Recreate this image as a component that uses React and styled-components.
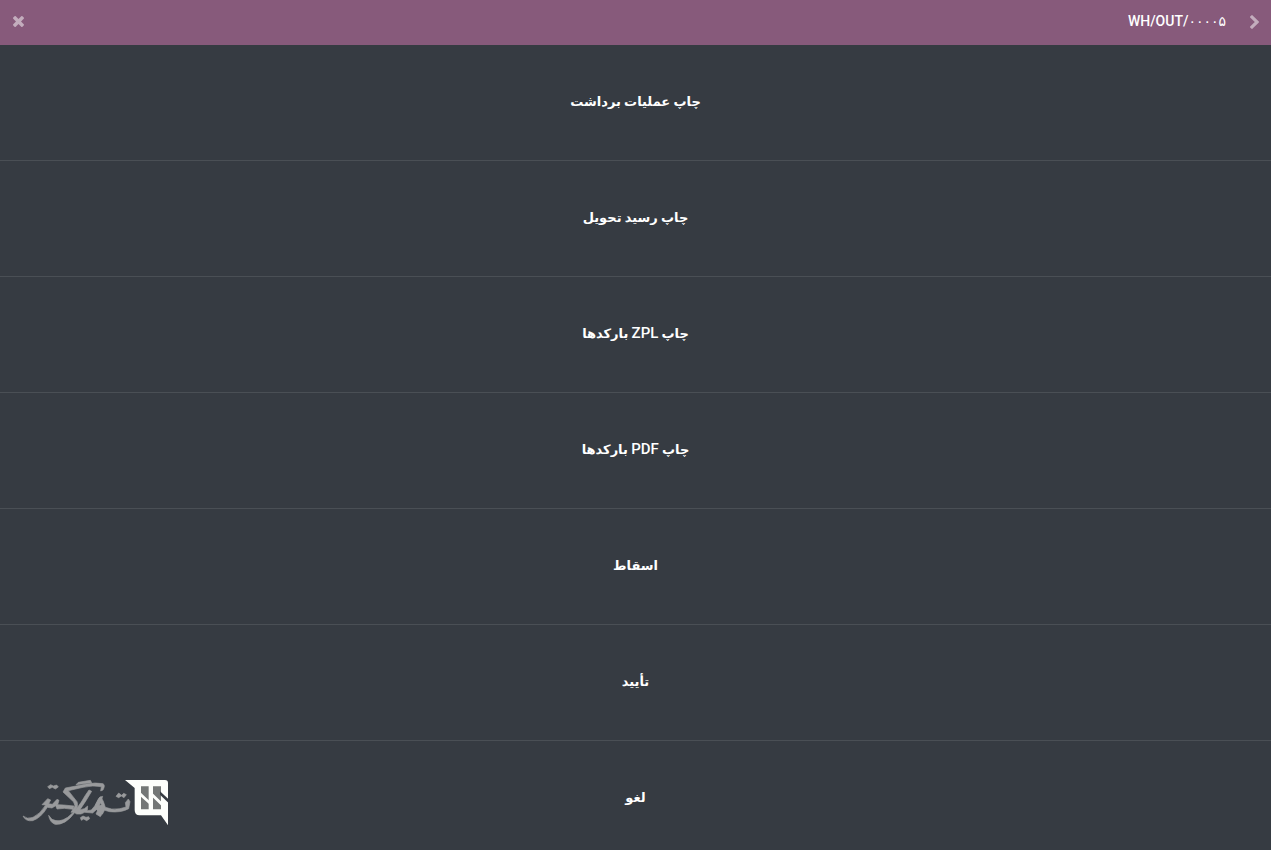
import styled, { createGlobalStyle } from "styled-components";

const GlobalStyle = createGlobalStyle`
  * {
    box-sizing: border-box;
  }
  body {
    margin: 0;
    background: #363b42;
    font-family: Roboto, "DejaVu Sans", sans-serif;
    font-size: 14px;
    line-height: 21px;
  }
`;

const Page = styled.div`
  display: flex;
  flex-direction: column;
  height: 100vh;
  overflow: hidden;
  color: white;
`;

const Header = styled.header`
  display: flex;
  flex: none;
  align-items: center;
  gap: 24px;
  height: 45px;
  padding: 0 12px 2px 13px;
  background: #875a7b;
`;

const Title = styled.h1`
  flex: 1;
  margin: 0;
  font-size: 14px;
  font-weight: 500;
  text-align: right;
`;

const IconButton = styled.button`
  display: flex;
  padding: 0;
  border: 0;
  background: none;
  color: #c3adbd;
  cursor: pointer;

  svg {
    width: ${({ $width }) => $width}px;
    height: ${({ $height }) => $height}px;
    fill: currentColor;
  }
`;

const Menu = styled.main`
  display: flex;
  flex-direction: column;
`;

const MenuButton = styled.button`
  flex: none;
  height: 116px;
  padding: 0 0 2px;
  border: 0;
  border-bottom: 1px solid #4a4f55;
  background: #363b42;
  color: white;
  font: inherit;
  font-size: 13px;
  font-weight: bold;
  cursor: pointer;
`;

const Latin = styled.bdi`
  font-size: 15px;
  font-weight: 500;
`;

const Logo = styled.svg`
  position: fixed;
  bottom: 20px;
  left: 20px;
  width: 150px;
  height: 55px;
  pointer-events: none;
`;

const Calligraphy = styled.g`
  fill: #999a9c;
  stroke: #999a9c;
  stroke-width: 2;
  stroke-linejoin: round;
`;

const actions = [
  { id: "picking", label: "چاپ عملیات برداشت" },
  { id: "delivery", label: "چاپ رسید تحویل" },
  {
    id: "zpl",
    label: (
      <>
        چاپ <Latin>ZPL</Latin> بارکدها
      </>
    ),
  },
  {
    id: "pdf",
    label: (
      <>
        چاپ <Latin>PDF</Latin> بارکدها
      </>
    ),
  },
  { id: "scrap", label: "اسقاط" },
  { id: "validate", label: "تأیید" },
  { id: "cancel", label: "لغو" },
];

function ChevronIcon() {
  return (
    <svg viewBox="90 -192 1036 1612" aria-hidden="true">
      <path d="M1107 659l-742 742q-19 19-45 19t-45-19l-166-166q-19-19-19-45t19-45l531-531-531-531q-19-19-19-45t19-45l166-166q19-19 45-19t45 19l742 742q19 19 19 45t-19 45z" />
    </svg>
  );
}

function CloseIcon() {
  return (
    <svg viewBox="110 366 1188 1188" aria-hidden="true">
      <path d="M1298 1322q0 40-28 68l-136 136q-28 28-68 28t-68-28l-294-294-294 294q-28 28-68 28t-68-28l-136-136q-28-28-28-68t28-68l294-294-294-294q-28-28-28-68t28-68l136-136q28-28 68-28t68 28l294 294 294-294q28-28 68-28t68 28l136 136q28 28 28 68t-28 68l-294 294 294 294q28 28 28 68z" />
    </svg>
  );
}

function BrandLogo() {
  return (
    <Logo viewBox="15 15 450 165" aria-hidden="true">
      <Calligraphy>
        <path d="M24 138Q36 149 54 142Q76 132 92 105L81 104L98 86L107 90L101 101L112 103L126 88L132 91L128 104L146 105L177 108L174 118L148 115L126 117L122 107L111 114L97 112Q78 144 53 152Q32 155 24 138Z" />
        <path d="M98 50L107 44L115 48L125 45L130 51L121 57L112 52L103 56Z" />
        <path d="M144 66L151 54L210 43Q242 36 264 41Q272 45 264 60L257 63L259 50Q234 45 204 52L160 62L186 95Q192 110 178 126L168 127L180 108L176 96Z" />
        <path d="M183 44L190 37L226 31L230 38Z" />
        <path d="M101 136L111 148Q134 159 158 142Q186 121 211 76L222 60L230 64L213 92L195 119L208 116L218 108L217 122L229 120L239 108L254 82L263 79L259 92L251 110L265 121L263 132L244 119L233 129L209 127L198 132L185 132L179 128Q151 166 120 163Q104 157 101 136Z" />
        <path d="M196 143L204 138L213 142L221 140L224 146L215 152L206 147L199 151Z" />
        <path
          fillRule="evenodd"
          d="M242 104L250 87L257 80L265 94L271 112L290 117Q314 119 333 111L331 98L340 87L345 95L341 116Q317 129 284 125L269 121L256 140L243 132L252 112L243 113ZM254 96L251 107L260 104Z"
        />
        <path d="M303 79L311 69L320 76L326 70L334 74L327 83L319 78L311 83Z" />
      </Calligraphy>
      <path
        fill="#fdfefb"
        d="M330 30H450Q459 30 459 39V166L438 136H374Q359 136 359 120V54Z"
      />
      <path fill="#747776" d="M378 49H401V118H378ZM414 49H438V118H414Z" />
      <path fill="#fdfefb" d="M376 67L403 92V103L376 79ZM405 62L440 96V108L405 74Z" />
      <path fill="#363b42" d="M435 64L460 87V98L435 74Z" />
    </Logo>
  );
}

export default function App() {
  return (
    <Page dir="rtl" lang="fa">
      <GlobalStyle />
      <Header>
        <IconButton aria-label="بازگشت" $width={9} $height={14}>
          <ChevronIcon />
        </IconButton>
        <Title dir="ltr">WH/OUT/۰۰۰۰۵</Title>
        <IconButton aria-label="بستن" $width={11} $height={11}>
          <CloseIcon />
        </IconButton>
      </Header>
      <Menu>
        {actions.map(({ id, label }) => (
          <MenuButton key={id}>{label}</MenuButton>
        ))}
      </Menu>
      <BrandLogo />
    </Page>
  );
}
